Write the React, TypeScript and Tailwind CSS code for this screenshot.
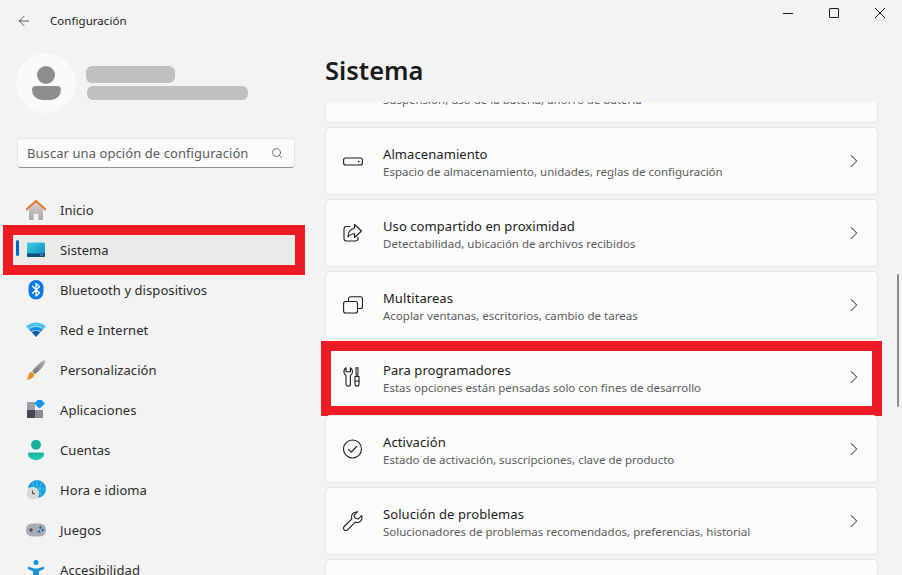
import {ArrowLeft, ChevronRight, Search} from 'lucide-react';
import type {ReactNode} from 'react';

function Glyph({children}: {children: ReactNode}) {
	return (
		<svg viewBox="0 0 20 20" className="h-5 w-5 shrink-0" fill="none">
			{children}
		</svg>
	);
}

function Line({children}: {children: ReactNode}) {
	return (
		<svg viewBox="0 0 20 20" className="h-5 w-5 shrink-0" fill="none" stroke="#1c1c1c" strokeWidth="1.1" strokeLinecap="round" strokeLinejoin="round">
			{children}
		</svg>
	);
}

const navItems: {label: string; active?: boolean; icon: ReactNode}[] = [
	{
		label: 'Inicio',
		icon: (
			<Glyph>
				<defs>
					<linearGradient id="homeWall" x1="0" y1="0" x2="0" y2="1">
						<stop offset="0" stopColor="#d3d0cd" />
						<stop offset="1" stopColor="#a9a6a4" />
					</linearGradient>
				</defs>
				<path d="M3 8.5 10 2.5l7 6V20h-4.6v-6.3H7.6V20H3z" fill="url(#homeWall)" />
				<path d="M.6 9.4 10 .9l9.4 8.5" stroke="#e3742b" strokeWidth="2" strokeLinecap="round" strokeLinejoin="round" />
			</Glyph>
		),
	},
	{
		label: 'Sistema',
		active: true,
		icon: (
			<Glyph>
				<defs>
					<linearGradient id="sysScreen" x1="0" y1="0" x2="1" y2="1">
						<stop offset="0" stopColor="#38d1de" />
						<stop offset="1" stopColor="#1384c9" />
					</linearGradient>
				</defs>
				<rect x="1" y="2.5" width="18" height="14.5" rx="1.5" fill="url(#sysScreen)" />
				<path d="M1 13.5h18V15.5a1.5 1.5 0 0 1-1.5 1.5h-15A1.5 1.5 0 0 1 1 15.500z" fill="#0d4f78" />
				<rect x="14" y="14.500" width="1" height="1" fill="#a8dcec" />
				<rect x="16" y="14.500" width="1" height="1" fill="#a8dcec" />
			</Glyph>
		),
	},
	{
		label: 'Bluetooth y dispositivos',
		icon: (
			<Glyph>
				<rect x="2.500" y="0" width="15" height="19.500" rx="7.500" fill="#0a78e8" />
				<path d="m6.500 6.300 7 6.400L10 16V3.500l3.500 3.300-7 6.400" stroke="#fff" strokeWidth="1.300" strokeLinejoin="round" strokeLinecap="round" />
			</Glyph>
		),
	},
	{
		label: 'Red e Internet',
		icon: (
			<Glyph>
				<path d="M0 6.500C5.500 1.100 14.500 1.100 20 6.500l-2.600 2.700C13.300 5.300 6.700 5.300 2.600 9.200z" fill="#4cc2f4" />
				<path d="M2.900 9.500C7 5.800 13 5.800 17.100 9.500l-2.500 2.500c-2.700-2.400-6.500-2.400-9.200 0z" fill="#1a94e6" />
				<path d="M5.700 12.300c2.500-2.100 6.100-2.100 8.600 0L10 17z" fill="#0b5cab" />
			</Glyph>
		),
	},
	{
		label: 'Personalización',
		icon: (
			<Glyph>
				<defs>
					<linearGradient id="brushHandle" x1="0" y1="1" x2="1" y2="0">
						<stop offset="0" stopColor="#6f6f6f" />
						<stop offset="1" stopColor="#b5b5b5" />
					</linearGradient>
				</defs>
				<path d="M18 .3c.9.1 1.500.8 1.300 1.700C17.500 6.500 13 11.500 9 14l-2.800-2.800C9.500 7 13.500 2.500 18 .3z" fill="url(#brushHandle)" />
				<path d="M5.600 11.800 8.400 14.600C8 17.500 5 20 .5 19.700c1.300-1 1.300-2.200 1.700-3.900.4-1.900 1.700-3.400 3.400-4z" fill="#f08a24" />
			</Glyph>
		),
	},
	{
		label: 'Aplicaciones',
		icon: (
			<Glyph>
				<rect x="1" y="2" width="8" height="8" fill="#9aa0a5" />
				<rect x="1" y="10" width="8" height="8" fill="#47494c" />
				<rect x="9" y="10" width="8" height="8" fill="#8a8c8f" />
				<rect x="9.700" y="-.4" width="7.600" height="7.600" rx="1" transform="rotate(45 13.500 3.500)" fill="#1a94ee" />
			</Glyph>
		),
	},
	{
		label: 'Cuentas',
		icon: (
			<Glyph>
				<defs>
					<linearGradient id="acct" x1="0" y1="0" x2="0" y2="1">
						<stop offset="0" stopColor="#1bb39d" />
						<stop offset="1" stopColor="#22cdb9" />
					</linearGradient>
				</defs>
				<circle cx="10" cy="4.800" r="5" fill="#16b09c" />
				<path d="M2 14c0-1 .8-1.600 1.700-1.600h12.600c.9 0 1.700.6 1.700 1.600 0 3.600-3.700 6-8 6s-8-2.400-8-6z" fill="url(#acct)" />
			</Glyph>
		),
	},
	{
		label: 'Hora e idioma',
		icon: (
			<Glyph>
				<circle cx="11" cy="9" r="9" fill="#1a9be0" />
				<path d="M11 0v18M2 9h18M6 2c3 4 3 10 0 14M16 2c-3 4-3 10 0 14" stroke="#5cd0ef" strokeWidth=".7" />
				<circle cx="6.500" cy="13.500" r="6.200" fill="#d9d9d9" stroke="#f3f3f3" strokeWidth=".6" />
				<path d="M6.500 10.500v3.200h2.500" stroke="#444" strokeWidth="1" />
			</Glyph>
		),
	},
	{
		label: 'Juegos',
		icon: (
			<Glyph>
				<rect x="0" y="3.500" width="20" height="13" rx="6" fill="#a9adb2" />
				<path d="M3 10h4M5 8v4" stroke="#333" strokeWidth="1" />
				<circle cx="14.500" cy="7.500" r="1.200" fill="#1268bd" />
				<circle cx="16.700" cy="10" r="1.200" fill="#1268bd" />
				<circle cx="13" cy="11.500" r="1.200" fill="#1268bd" />
			</Glyph>
		),
	},
	{
		label: 'Accesibilidad',
		icon: (
			<Glyph>
				<circle cx="10" cy="2.500" r="2.500" fill="#1692dc" />
				<path d="M2 6.500 8 8.500h4l6-2v2.500l-5 2.200V20H7v-8.800L2 9z" fill="#1692dc" />
			</Glyph>
		),
	},
];

const cards: {title: string; text: string; mark?: boolean; icon: ReactNode}[] = [
	{
		title: 'Energía y batería',
		text: 'Suspensión, uso de la batería, ahorro de batería',
		icon: <Line><path d="M2 7h14v6H2z" /></Line>,
	},
	{
		title: 'Almacenamiento',
		text: 'Espacio de almacenamiento, unidades, reglas de configuración',
		icon: (
			<Line>
				<rect x=".6" y="7" width="18.800" height="7" rx="2" />
				<path d="M15.500 10.500h.4" strokeWidth="1.400" />
			</Line>
		),
	},
	{
		title: 'Uso compartido en proximidad',
		text: 'Detectabilidad, ubicación de archivos recibidos',
		icon: (
			<Line>
				<path d="M7 3.500H3.500A2.500 2.500 0 0 0 1 6v9.500A2.500 2.500 0 0 0 3.500 18h9a2.500 2.500 0 0 0 2.500-2.500V14" />
				<path d="M11.500 1.500 18.500 8l-7 6.500v-3.800c-3 0-5 1-6.500 3.300 0-4.500 2.500-8 6.500-8.700z" />
			</Line>
		),
	},
	{
		title: 'Multitareas',
		text: 'Acoplar ventanas, escritorios, cambio de tareas',
		icon: (
			<Line>
				<path d="M5.500 6.500V3.800a2 2 0 0 1 2-2h10a2 2 0 0 1 2 2v7.700a2 2 0 0 1-2 2H14.500" />
				<rect x=".6" y="6.500" width="13.900" height="11.500" rx="2" />
			</Line>
		),
	},
	{
		title: 'Para programadores',
		text: 'Estas opciones están pensadas solo con fines de desarrollo',
		mark: true,
		icon: (
			<Line>
				<path d="M3 .8C1.500 1.800.7 3.500 1 5.500c.2 1.300 1 2.300 2 2.900V17a2.200 2.200 0 0 0 4.400 0V8.400c1-.6 1.800-1.600 2-2.900.3-2-.5-3.700-2-4.700V4.800H3z" />
				<path d="M13 .8h2v4l-.3 4.700h-1.400L13 4.800z" />
				<path d="M12 9.500h4V17a2 2 0 0 1-4 0z" />
				<path d="M12 14h4" />
			</Line>
		),
	},
	{
		title: 'Activación',
		text: 'Estado de activación, suscripciones, clave de producto',
		icon: (
			<Line>
				<circle cx="9.500" cy="10" r="9" />
				<path d="m5.500 10.300 2.800 2.800 5.300-5.600" />
			</Line>
		),
	},
	{
		title: 'Solución de problemas',
		text: 'Solucionadores de problemas recomendados, preferencias, historial',
		icon: (
			<Line>
				<path d="M13.500 1C10.800 1 8.500 3.200 8.500 6c0 .7.100 1.300.4 1.900L1.200 15.500a2.300 2.300 0 0 0 3.300 3.300l7.700-7.700c.6.200 1.200.4 1.800.4 2.800 0 5-2.300 5-5 0-.7-.1-1.300-.4-1.900l-3.600 3.500-3.100-1 -.8-3 3.500-3.500C14.100 1.200 13.800 1 13.500 1z" />
			</Line>
		),
	},
	{
		title: 'Recuperación',
		text: 'Restablecer, inicio avanzado, volver',
		icon: <Line><path d="M3 10a7 7 0 1 0 2-5" /></Line>,
	},
];

export default function App() {
	return (
		<div className="flex h-[575px] w-[902px] flex-col overflow-hidden bg-[#f3f3f3] font-['Noto_Sans','Open_Sans',sans-serif] text-[#1b1b1b]">
			<header className="relative flex h-[40px] shrink-0 items-center pt-px">
				<ArrowLeft className="ml-[16px] h-4 w-4 text-[#333333]" strokeWidth={1.2} />
				<span className="ml-[18px] text-[11.500px] tracking-[0.05px]">Configuración</span>
				<div className="ml-auto mr-[17px] flex h-[24px] items-center gap-[36px] self-start">
					<div className="h-px w-[10px] bg-[#1b1b1b]" />
					<div className="h-[10px] w-[10px] rounded-[1px] border border-[#1b1b1b]" />
					<svg viewBox="0 0 10 10" className="h-[10px] w-[10px]" stroke="#1b1b1b" strokeWidth="1">
						<path d="m0 0 10 10M10 0 0 10" />
					</svg>
				</div>
			</header>
			<div className="flex min-h-0 flex-1">
				<aside className="flex w-[325px] shrink-0 flex-col overflow-hidden">
					<div className="ml-[16px] mt-[13px] flex shrink-0 items-center gap-[10px]">
						<div className="flex h-[60px] w-[60px] flex-col items-center justify-center gap-[2px] rounded-full bg-[#fafafa]">
							<div className="h-[18px] w-[18px] rounded-full bg-[#8e8e8e]" />
							<div className="h-[14px] w-[29px] rounded-b-[14px] rounded-t-[5px] bg-[#8e8e8e]" />
						</div>
						<div className="flex flex-col gap-[3px]">
							<div className="h-[17px] w-[89px] rounded-[6px] bg-[#c0c0c0]" />
							<div className="ml-px h-[14px] w-[161px] rounded-[6px] bg-[#c0c0c0]" />
						</div>
					</div>
					<div className="ml-[17px] mt-[25px] flex h-[30px] w-[278px] shrink-0 items-center justify-between rounded-[4px] border border-[#e5e5e5] border-b-[#8f8f8f] bg-[#fbfbfb] pl-[9px] pr-[11px] text-[13px] tracking-[0.07px] text-[#5c5c5c]">
						<span className="pt-[2px]">Buscar una opción de configuración</span>
						<Search className="h-[12px] w-[12px] text-[#444444]" strokeWidth={1.4} />
					</div>
					<nav className="ml-[13px] mt-[22px] w-[282px] shrink-0">
						{navItems.map((item) => (
							<div key={item.label} className="relative flex h-[40px] items-center">
								<div className={`relative flex h-[36px] w-full items-center gap-[14px] rounded-[4px] pl-[13px] text-[13px] tracking-[0.07px] ${item.active ? 'bg-[#eaeaea]' : ''}`}>
									{item.active && <div className="absolute left-[3px] top-[8px] h-[16px] w-[3px] rounded-full bg-[#0067c0]" />}
									{item.icon}
									<span className="pt-[2px] text-[#2b2b2b]">{item.label}</span>
								</div>
								{item.active && <div className="pointer-events-none absolute -bottom-[5px] -left-[10px] -right-[10px] -top-[5px] border-[10px] border-[#ed1c24]" />}
							</div>
						))}
					</nav>
				</aside>
				<main className="relative flex min-w-0 flex-1 flex-col pr-[24px]">
					<h1 className="flex h-[62px] shrink-0 items-center text-[25.500px] font-semibold leading-none">Sistema</h1>
					<div className="-ml-[8px] -mr-[8px] min-h-0 flex-1 overflow-hidden px-[8px]">
						<div className="-mt-[47px] flex flex-col gap-[4px]">
							{cards.map((card) => (
								<div key={card.title} className="relative flex h-[68px] shrink-0 items-center gap-[20px] rounded-[5px] border border-[#e8e8e8] bg-[#fbfbfb] pl-[17px] pr-[12px]">
									{card.icon}
									<div className="flex flex-1 flex-col pt-px">
										<span className="text-[13px] leading-5 tracking-[0.08px]">{card.title}</span>
										<span className="text-[11.500px] leading-4 text-[#5c5c5c]">{card.text}</span>
									</div>
									<ChevronRight className="h-[22px] w-[22px] text-[#444444]" strokeWidth={1.15} />
									{card.mark && <div className="pointer-events-none absolute -bottom-[6px] -left-[5px] -right-[5px] -top-[3px] border-[10px] border-[#ed1c24]" />}
								</div>
							))}
						</div>
					</div>
					<div className="absolute right-[3px] top-[234px] h-[133px] w-[2px] rounded-full bg-[#8a8a8a]" />
				</main>
			</div>
		</div>
	);
}
